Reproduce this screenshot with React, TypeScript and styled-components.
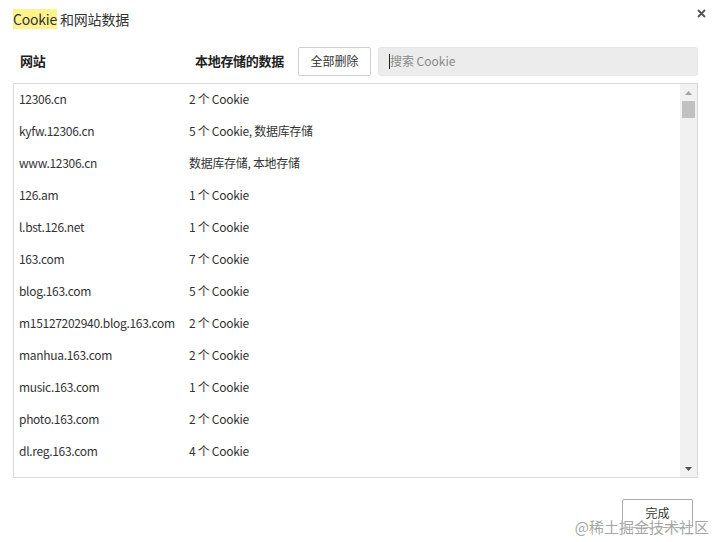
import React from 'react';
import styled, { createGlobalStyle } from 'styled-components';

const GlobalStyle = createGlobalStyle`
  html, body {
    margin: 0;
    padding: 0;
    background: #ffffff;
  }
  body {
    font-family: "Noto Sans CJK SC", "Noto Sans", sans-serif;
    color: #333333;
  }
`;

const Dialog = styled.div`
  position: relative;
  width: 714px;
  height: 542px;
  box-sizing: border-box;
  padding: 9px 16px 0 13px;
  display: flex;
  flex-direction: column;
  overflow: hidden;
`;

const TitleRow = styled.div`
  display: flex;
  align-items: center;
  height: 20px;
  font-size: 14px;
  letter-spacing: -0.2px;
  color: #333;
`;

const Highlight = styled.span`
  background: #fff38e;
  line-height: 20px;
`;

const CloseButton = styled.button`
  position: absolute;
  top: 6px;
  right: 6px;
  width: 14px;
  height: 14px;
  padding: 0;
  border: none;
  background: transparent;
  display: flex;
  align-items: center;
  justify-content: center;
`;

const HeaderRow = styled.div`
  display: flex;
  align-items: center;
  height: 29px;
  margin-top: 18px;
`;

const HeaderLabel = styled.div<{ $width?: number }>`
  flex: ${(p) => (p.$width ? `0 0 ${p.$width}px` : '0 0 auto')};
  padding-left: ${(p) => (p.$width ? '7px' : '0')};
  padding-bottom: 2px;
  box-sizing: border-box;
  font-size: 13px;
  font-weight: bold;
  color: #222;
  letter-spacing: -0.3px;
`;

const Button = styled.button`
  height: 29px;
  box-sizing: border-box;
  padding: 0 0 2px;
  border: 1px solid #cfcfcf;
  border-radius: 2px;
  background: #fff;
  font-family: "Noto Sans CJK SC", "Noto Sans", sans-serif;
  font-size: 12px;
  color: #333;
  white-space: nowrap;
`;

const DeleteAllButton = styled(Button)`
  margin-left: 14px;
  width: 73px;
`;

const SearchBox = styled.div`
  flex: 1;
  height: 29px;
  margin-left: 7px;
  box-sizing: border-box;
  display: flex;
  align-items: center;
  padding: 0 0 2px 10px;
  background: #ececec;
  border: 1px solid #e6e6e6;
  border-radius: 3px;
  font-size: 12px;
  color: #8a8a8a;
`;

const Caret = styled.span`
  width: 1px;
  height: 15px;
  margin-top: 2px;
  background: #222;
`;

const ListBox = styled.div`
  margin-top: 7px;
  height: 395px;
  box-sizing: border-box;
  border: 1px solid #d9d9d9;
  display: flex;
  overflow: hidden;
`;

const Rows = styled.div`
  flex: 1;
  overflow: hidden;
`;

const Row = styled.div`
  display: flex;
  align-items: center;
  height: 32px;
  box-sizing: border-box;
  padding-bottom: 4px;
  font-size: 12px;
  letter-spacing: -0.3px;
  color: #333;
`;

const SiteCell = styled.div`
  flex: 0 0 175px;
  box-sizing: border-box;
  padding-left: 5px;
  white-space: nowrap;
`;

const DataCell = styled.div`
  flex: 1;
  white-space: nowrap;
`;

const ScrollTrack = styled.div`
  flex: 0 0 17px;
  background: #f1f1f1;
  display: flex;
  flex-direction: column;
  align-items: center;
`;

const ScrollArrow = styled.div`
  height: 17px;
  display: flex;
  align-items: center;
  justify-content: center;
`;

const ScrollThumb = styled.div`
  width: 13px;
  height: 17px;
  background: #c1c1c1;
`;

const ScrollSpace = styled.div`
  flex: 1;
`;

const Footer = styled.div`
  display: flex;
  justify-content: flex-end;
  margin-top: 21px;
  padding-right: 5px;
`;

const DoneButton = styled(Button)`
  width: 71px;
  border-color: #a9a9a9;
`;

const Watermark = styled.div`
  position: absolute;
  right: 5px;
  bottom: 5px;
  font-size: 15px;
  font-family: "Noto Sans CJK SC", sans-serif;
  color: rgba(140, 140, 140, 0.8);
  text-shadow: 0 0 2px #fff, 0 0 1px #fff;
  pointer-events: none;
`;

const sites: [string, string][] = [
  ['12306.cn', '2 个 Cookie'],
  ['kyfw.12306.cn', '5 个 Cookie, 数据库存储'],
  ['www.12306.cn', '数据库存储, 本地存储'],
  ['126.am', '1 个 Cookie'],
  ['l.bst.126.net', '1 个 Cookie'],
  ['163.com', '7 个 Cookie'],
  ['blog.163.com', '5 个 Cookie'],
  ['m15127202940.blog.163.com', '2 个 Cookie'],
  ['manhua.163.com', '2 个 Cookie'],
  ['music.163.com', '1 个 Cookie'],
  ['photo.163.com', '2 个 Cookie'],
  ['dl.reg.163.com', '4 个 Cookie'],
];

function App() {
  return (
    <>
      <GlobalStyle />
      <Dialog>
        <TitleRow>
          <Highlight>Cookie</Highlight>&nbsp;和网站数据
        </TitleRow>
        <CloseButton aria-label="关闭">
          <svg width="9" height="9" viewBox="0 0 9 9">
            <path d="M1 1L8 8M8 1L1 8" stroke="#555" strokeWidth="1.8" />
          </svg>
        </CloseButton>

        <HeaderRow>
          <HeaderLabel $width={182}>网站</HeaderLabel>
          <HeaderLabel>本地存储的数据</HeaderLabel>
          <DeleteAllButton>全部删除</DeleteAllButton>
          <SearchBox>
            <Caret />
            搜索 Cookie
          </SearchBox>
        </HeaderRow>

        <ListBox>
          <Rows>
            {sites.map(([site, data]) => (
              <Row key={site}>
                <SiteCell>{site}</SiteCell>
                <DataCell>{data}</DataCell>
              </Row>
            ))}
          </Rows>
          <ScrollTrack>
            <ScrollArrow>
              <svg width="7" height="4" viewBox="0 0 7 4">
                <path d="M0 4L3.5 0L7 4Z" fill="#a3a3a3" />
              </svg>
            </ScrollArrow>
            <ScrollThumb />
            <ScrollSpace />
            <ScrollArrow>
              <svg width="7" height="4" viewBox="0 0 7 4">
                <path d="M0 0L7 0L3.5 4Z" fill="#505050" />
              </svg>
            </ScrollArrow>
          </ScrollTrack>
        </ListBox>

        <Footer>
          <DoneButton>完成</DoneButton>
        </Footer>
        <Watermark>@稀土掘金技术社区</Watermark>
      </Dialog>
    </>
  );
}

export default App;
